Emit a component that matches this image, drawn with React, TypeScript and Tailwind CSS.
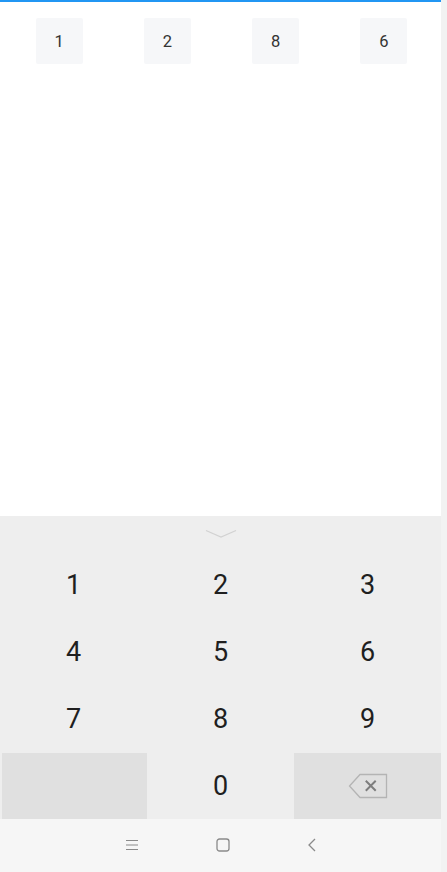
const code = ["1", "2", "8", "6"];
const keys = ["1", "2", "3", "4", "5", "6", "7", "8", "9"];

function BackspaceIcon() {
  return (
    <svg width="40" height="26" viewBox="0 0 40 26" fill="none">
      <path d="M12 1.5 H38.5 V24.5 H12 L1.5 13 Z" stroke="#b4b4b4" strokeWidth="1.3" strokeLinejoin="miter" />
      <path d="M18.5 8.5 L27 17 M27 8.5 L18.5 17" stroke="#7d7d7d" strokeWidth="2" strokeLinecap="square" />
    </svg>
  );
}

export default function App() {
  return (
    <div
      className="flex h-[872px] w-[447px] overflow-hidden bg-[#f3f3f3]"
      style={{ fontFamily: "Roboto, 'Noto Sans', sans-serif" }}
    >
      <div className="flex w-[441px] flex-col">
        {/* code display */}
        <div className="h-[516px] border-t-2 border-[#2196f3] bg-white pl-[2px]">
          <div className="grid grid-cols-4 px-[3px] pt-[16px]">
            {code.map((d, i) => (
              <div key={i} className="flex justify-center">
                <div className="flex h-[46px] w-[47px] items-center justify-center rounded-[2px] bg-[#f6f7f9] pt-[2px] text-[16.5px] text-[#333]">
                  {d}
                </div>
              </div>
            ))}
          </div>
        </div>

        {/* numeric keypad */}
        <div className="flex flex-col bg-[#eeeeee]">
          <div className="flex h-[36px] items-start justify-center pt-[13px]">
            <svg width="32" height="10" viewBox="0 0 32 10">
              <path d="M1 1.5 L16 8 L31 1.5" stroke="#d2d2d2" strokeWidth="1.2" fill="none" />
            </svg>
          </div>
          <div className="grid grid-cols-3">
            {keys.map((k) => (
              <div key={k} className="flex h-[67px] items-center justify-center text-[27px] text-[#1f1f1f]">
                {k}
              </div>
            ))}
            <div className="ml-[2px] h-[66px] bg-[#e0e0e0]" />
            <div className="flex h-[66px] items-center justify-center text-[27px] text-[#1f1f1f]">0</div>
            <div className="flex h-[66px] items-center justify-center bg-[#e0e0e0]">
              <BackspaceIcon />
            </div>
          </div>
        </div>

        {/* system nav bar */}
        <div className="flex flex-1 items-center justify-center bg-[#f6f6f6] pb-[2px]">
          <div className="flex items-center gap-[77px]">
            <svg width="14" height="12" viewBox="0 0 14 12">
              <path d="M1 1.5 H13 M1 6 H13 M1 10.5 H13" stroke="#8a8a8a" strokeWidth="1.1" />
            </svg>
            <svg width="14" height="14" viewBox="0 0 14 14">
              <rect x="1" y="1" width="12" height="12" rx="2.5" stroke="#8a8a8a" strokeWidth="1.3" fill="none" />
            </svg>
            <svg width="10" height="14" viewBox="0 0 10 14">
              <path d="M8 1 L2 7 L8 13" stroke="#8a8a8a" strokeWidth="1.3" fill="none" />
            </svg>
          </div>
        </div>
      </div>
      <div className="w-[6px] bg-[#f2f2f2]" />
    </div>
  );
}
